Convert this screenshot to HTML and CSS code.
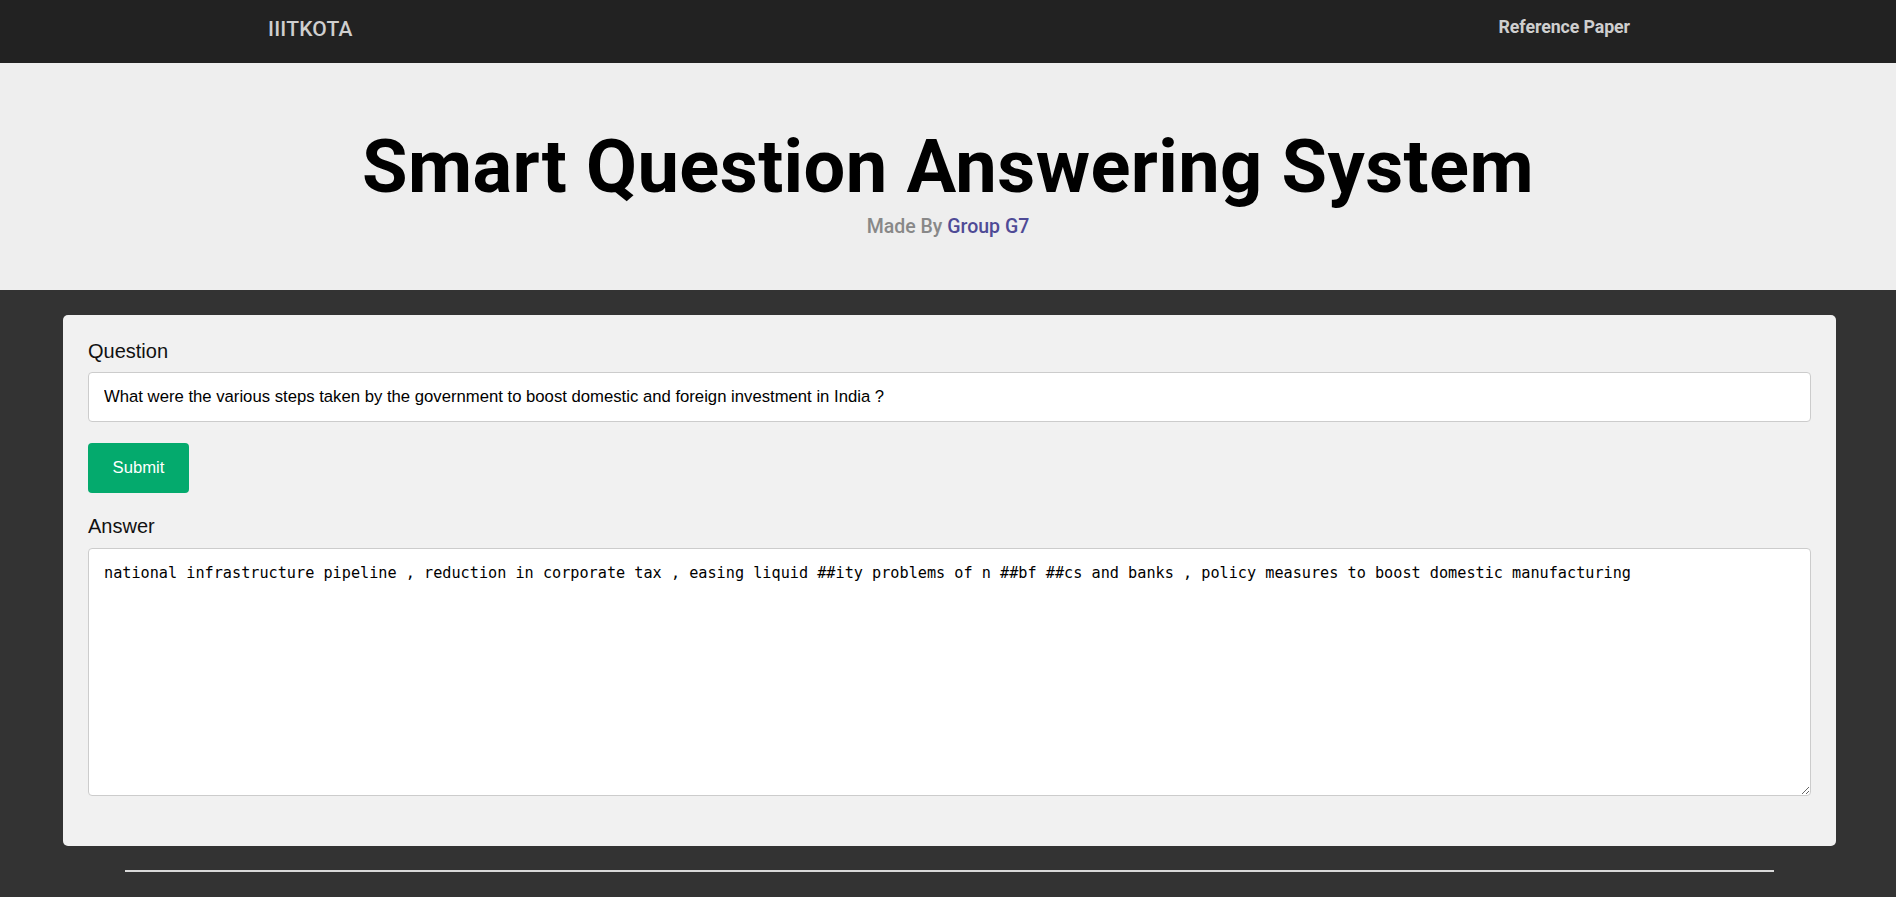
FILE: index.html
```html
<!DOCTYPE html>
<html lang="en">
<head>
<meta charset="utf-8">
<title>Smart Question Answering System</title>
<link rel="stylesheet" href="styles.css">
</head>
<body>
<nav class="navbar">
  <a class="brand" href="#">IIITKOTA</a>
  <a class="nav-link" href="#">Reference Paper</a>
</nav>
<header class="hero">
  <h1 class="title">Smart Question Answering System</h1>
  <p class="subtitle">Made By <span class="group">Group G7</span></p>
</header>
<main class="main">
  <form class="card">
    <label class="label" for="q">Question</label>
    <input class="input" id="q" type="text" value="What were the various steps taken by the government to boost domestic and foreign investment in India ?">
    <button class="btn" type="button">Submit</button>
    <label class="label label-answer" for="a">Answer</label>
    <textarea class="answer" id="a">national infrastructure pipeline , reduction in corporate tax , easing liquid ##ity problems of n ##bf ##cs and banks , policy measures to boost domestic manufacturing</textarea>
  </form>
  <hr class="rule">
</main>
</body>
</html>
```
FILE: styles.css
```css
* { box-sizing: border-box; }
html, body { margin: 0; padding: 0; }
body {
  background: #333333;
  min-height: 897px;
  font-family: "Liberation Sans", Arial, sans-serif;
}
.navbar {
  height: 63px;
  background: #222222;
  display: flex;
  align-items: center;
  justify-content: space-between;
  padding: 0 266px 0 268px;
}
.brand {
  font-family: Roboto, "DejaVu Sans", sans-serif;
  font-size: 21px;
  font-weight: 500;
  color: #cfcfcf;
  text-decoration: none;
  letter-spacing: 0.2px;
  margin-bottom: 6px;
}
.nav-link {
  font-family: Roboto, "DejaVu Sans", sans-serif;
  font-size: 17.8px;
  font-weight: 700;
  color: #cfcfcf;
  text-decoration: none;
  letter-spacing: -0.1px;
  margin-bottom: 10px;
}
.hero {
  background: #eeeeee;
  height: 227px;
  padding-top: 67px;
  text-align: center;
}
.title {
  margin: 0;
  font-family: Roboto, "DejaVu Sans", sans-serif;
  font-weight: 700;
  font-size: 74px;
  line-height: 74px;
  letter-spacing: 0.4px;
  color: #000;
}
.subtitle {
  margin: 13px 0 0;
  font-family: Roboto, "DejaVu Sans", sans-serif;
  font-size: 19.5px;
  line-height: 20px;
  font-weight: 500;
  color: #888888;
}
.group { color: #4e4a96; }
.main { padding: 25px 60px 0 63px; }
.card {
  background: #f1f1f1;
  border-radius: 5px;
  padding: 25px 25px 50px;
  display: flex;
  flex-direction: column;
  align-items: flex-start;
}
.label {
  display: block;
  font-size: 20px;
  line-height: 23px;
  color: #111;
  margin-bottom: 9px;
}
.label-answer { margin-top: 22px; margin-bottom: 10px; }
.input {
  width: 100%;
  height: 50px;
  border: 1px solid #cccccc;
  border-radius: 4px;
  background: #fff;
  padding: 0 15px;
  font-family: "Liberation Sans", Arial, sans-serif;
  font-size: 16.7px;
  color: #000;
  outline: none;
}
.btn {
  margin-top: 21px;
  width: 101px;
  height: 50px;
  border: none;
  border-radius: 4px;
  background: #04aa6d;
  color: #fff;
  font-family: "Liberation Sans", Arial, sans-serif;
  font-size: 16.7px;
}
.answer {
  display: block;
  width: 100%;
  height: 248px;
  border: 1px solid #cccccc;
  border-radius: 4px;
  background: #fff;
  padding: 15px 15px;
  font-family: "DejaVu Sans Mono", monospace;
  font-size: 15.2px;
  line-height: 18px;
  color: #000;
  resize: vertical;
  outline: none;
}
.rule {
  width: 1649px;
  margin: 24px auto 0;
  border: none;
  height: 2px;
  background: #d9d9d9;
}
```
